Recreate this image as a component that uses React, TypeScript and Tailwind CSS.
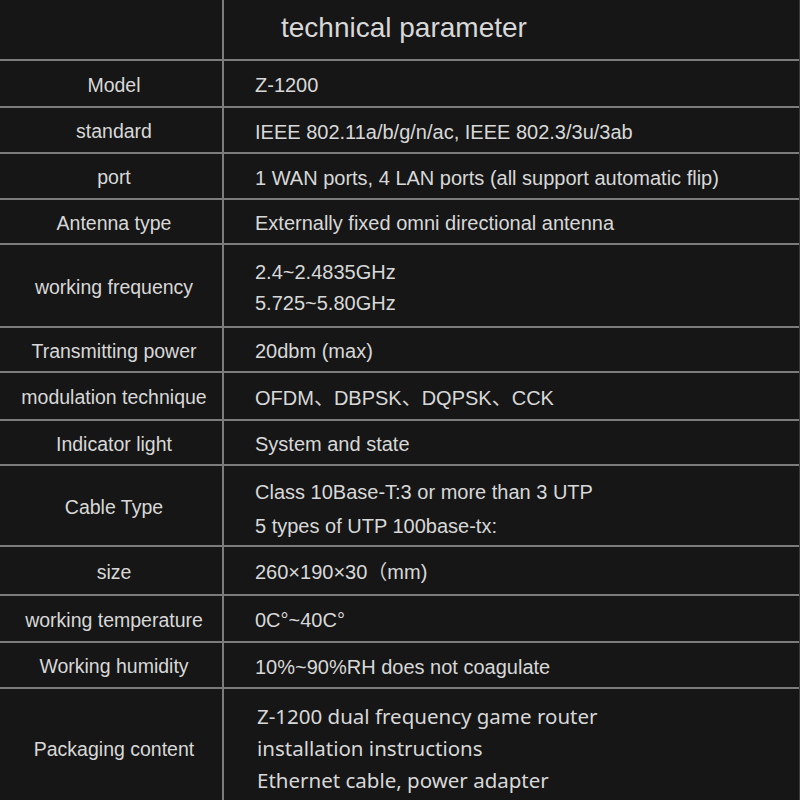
const rows: { label: string; value: string[]; h: string; big?: boolean }[] = [
  { label: 'Model', value: ['Z-1200'], h: 'h-[47px]' },
  { label: 'standard', value: ['IEEE 802.11a/b/g/n/ac, IEEE 802.3/3u/3ab'], h: 'h-[46px]' },
  { label: 'port', value: ['1 WAN ports, 4 LAN ports (all support automatic flip)'], h: 'h-[46px]' },
  { label: 'Antenna type', value: ['Externally fixed omni directional antenna'], h: 'h-[45px]' },
  { label: 'working frequency', value: ['2.4~2.4835GHz', '5.725~5.80GHz'], h: 'h-[83px]' },
  { label: 'Transmitting power', value: ['20dbm (max)'], h: 'h-[45px]' },
  { label: 'modulation technique', value: ['OFDM、DBPSK、DQPSK、CCK'], h: 'h-[48px]' },
  { label: 'Indicator light', value: ['System and state'], h: 'h-[45px]' },
  { label: 'Cable Type', value: ['Class 10Base-T:3 or more than 3 UTP', '5 types of UTP 100base-tx:'], h: 'h-[81px]' },
  { label: 'size', value: ['260×190×30（mm)'], h: 'h-[49px]' },
  { label: 'working temperature', value: ['0C°~40C°'], h: 'h-[47px]' },
  { label: 'Working humidity', value: ['10%~90%RH does not coagulate'], h: 'h-[46px]' },
  {
    label: 'Packaging content',
    value: ['Z-1200 dual frequency game router', 'installation instructions', 'Ethernet cable, power adapter'],
    h: 'h-[120px]',
    big: true,
  },
];

export default function App() {
  return (
    <div
      className="h-[800px] w-[800px] overflow-hidden bg-[#161616] text-[#d8d8d8] border-r border-[#3a3a3a]"
      style={{ fontFamily: '"Liberation Sans", Arial, "Noto Sans CJK SC", sans-serif' }}
    >
      {/* Header */}
      <div className="flex h-[61px] border-b-2 border-[#7c7c7c]">
        <div className="w-[224px] shrink-0 border-r-2 border-[#7c7c7c]" />
        <div className="flex-1 flex items-center pl-[57px] pb-[4px] text-[28px]">technical parameter</div>
      </div>

      {rows.map((r) => (
        <div key={r.label} className={`flex ${r.h} border-b-2 border-[#7c7c7c]`}>
          <div className="w-[224px] shrink-0 border-r-2 border-[#7c7c7c] flex items-center justify-center text-[19.5px] pt-[4px] pl-[6px]">
            {r.label}
          </div>
          <div
            className={
              r.big
                ? 'flex-1 flex flex-col justify-start pl-[33px] pt-[11px] text-[20.5px] leading-[32px]'
                : r.label === 'Cable Type'
                  ? 'flex-1 flex flex-col justify-center pl-[31px] pt-[6px] text-[20px] leading-[34px]'
                  : 'flex-1 flex flex-col justify-center pl-[31px] pt-[4px] text-[20px] leading-[31px]'
            }
            style={r.big ? { fontFamily: '"Noto Sans", "Noto Sans CJK SC", sans-serif' } : undefined}
          >
            {r.value.map((v) => (
              <div key={v}>{v}</div>
            ))}
          </div>
        </div>
      ))}
    </div>
  );
}
